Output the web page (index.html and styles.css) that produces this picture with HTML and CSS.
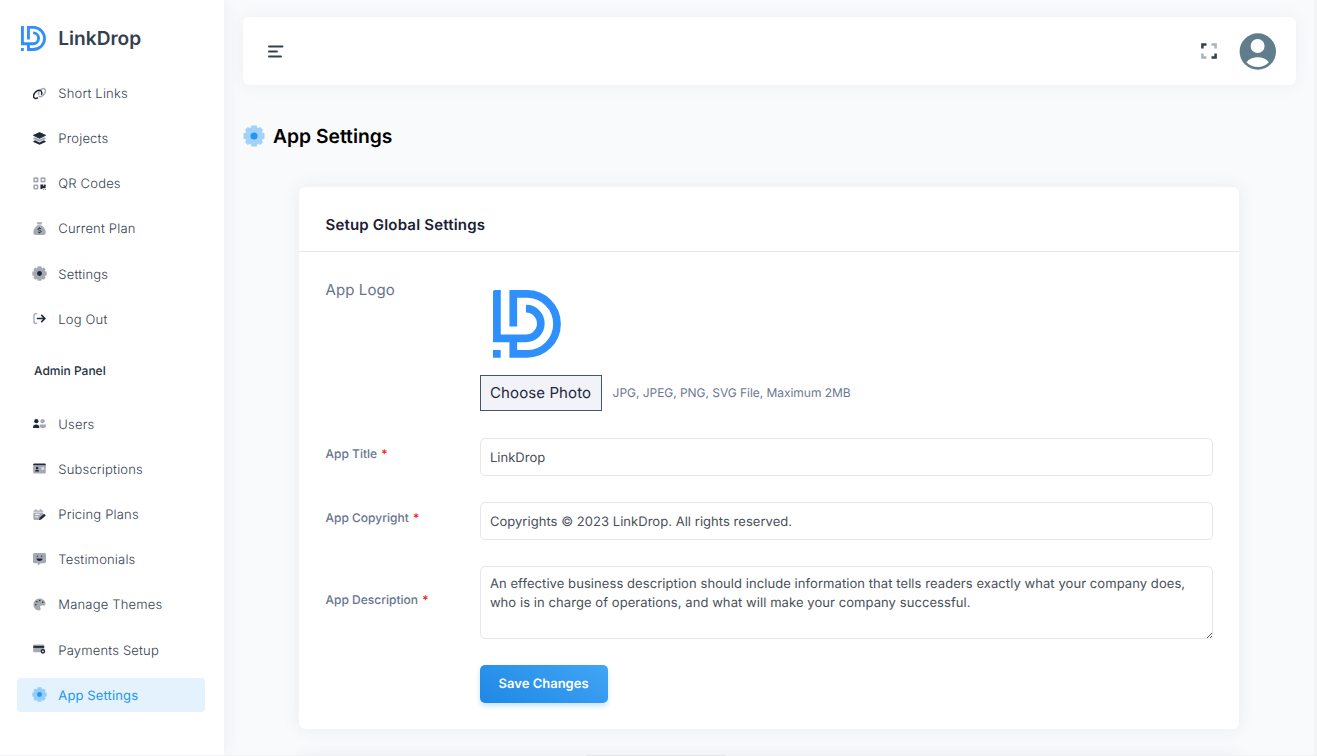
FILE: index.html
```html
<!DOCTYPE html>
<html lang="en">
<head>
<meta charset="utf-8">
<title>App Settings</title>
<link rel="stylesheet" href="styles.css">
</head>
<body>
<svg class="defs" width="0" height="0" aria-hidden="true">
  <symbol id="logo" viewBox="0 0 68 68"><path d="M3.900 1V48.300H33A14.800 14.800 0 0 0 33 18.700M20.300 36.500V3.900H34A30 30 0 0 1 34 63.900H20.300V50" fill="none" stroke="#2f8ffb" stroke-width="7.700"/><path d="M0 60h7.700v7.800H0zM0 2Q0 0 2 0h5.700v2z" fill="#2f8ffb"/></symbol>
  <symbol id="gear" viewBox="0 0 24 24"><path d="M9 .5h6l.6 2.500 1 .4 2.200-1.200 3 3-1.200 2.200.5 1 2.400.6v6l-2.400.6-.5 1 1.200 2.200-3 3-2.200-1.200-1 .5-.6 2.400H9l-.6-2.400-1-.5-2.200 1.200-3-3 1.200-2.200-.5-1L.500 15V9l2.400-.6.500-1-1.200-2.200 3-3 2.200 1.200 1-.4z" fill="currentColor" opacity=".4"/><circle cx="12" cy="12" r="3.900" fill="currentColor"/></symbol>
</svg>
<div class="app">
  <aside class="sidebar">
    <div class="brand"><svg class="brand-logo"><use href="#logo"/></svg><span>LinkDrop</span></div>
    <nav class="nav">
      <a class="item"><svg viewBox="0 0 14 14"><g fill="none" stroke="currentColor" stroke-width="1.600"><path opacity=".4" d="M6.200 9.600C7.600 11.300 9.900 10.200 11.500 8.300S14 4 12.700 2.500 9 1.800 7.400 3.900 5.600 7.800 6.500 8.600"/><path d="M9 8.500C10 6.500 9.300 4 7.800 3.600 6 3 4 4 2.500 5.700S0 10 1.300 11.500 4 12.400 5.300 11.500"/></g></svg><span>Short Links</span></a>
      <a class="item"><svg viewBox="0 0 14 14"><path d="M7 .6 13.500 3.600 7 6.800.500 3.600z" fill="currentColor" stroke="currentColor" stroke-linejoin="round"/><path opacity=".4" d="m.4 6.500 1.800-.9L7 8l4.800-2.400 1.800.9v1L7 10.500.4 7.500z" fill="currentColor"/><path d="m.4 10 1.800-1L7 11.200 11.800 9l1.800 1v.8L7 13.700.4 10.800z" fill="currentColor"/></svg><span>Projects</span></a>
      <a class="item"><svg viewBox="0 0 14 14"><g fill="none" stroke="currentColor" stroke-width="1.700" opacity=".4"><rect x="1.200" y="1.200" width="3.800" height="3.800" rx=".5"/><rect x="8.900" y="1.200" width="3.800" height="3.800" rx=".5"/><rect x="1.200" y="8.900" width="3.800" height="3.800" rx=".5"/></g><path d="M8 8h3v1.500h1V8h1.600v4H10v1H8z" fill="currentColor"/><path opacity=".6" d="M11 13h1v1h-1zM13 13h1v1h-1z" fill="currentColor"/></svg><span>QR Codes</span></a>
      <a class="item"><svg viewBox="0 0 14 14"><path opacity=".4" d="M4 .2h6L9 2.800H5zM5 3.500h4c2.800 2 4.700 5 4.700 7.800 0 1.600-1 2.600-2.500 2.600H2.800C1.300 13.900.300 12.900.300 11.300.300 8.500 2.200 5.500 5 3.500z" fill="currentColor"/><path d="M8.800 7.400C7.500 6.400 5.300 6.800 5.500 8S8.700 8.900 8.700 10.100 6.500 11.600 5.200 10.600M7 5.800v1M7 11.200v1" fill="none" stroke="currentColor" stroke-width="1"/></svg><span>Current Plan</span></a>
      <a class="item"><svg class="gear"><use href="#gear"/></svg><span>Settings</span></a>
      <a class="item"><svg viewBox="0 0 14 14"><path d="M4.500 1.800H3A2 2 0 0 0 1 3.800v6.400a2 2 0 0 0 2 2h1.500" fill="none" stroke="currentColor" stroke-width="1.500" opacity=".4"/><path d="M4.800 7h7.700M9.400 3.600 12.800 7l-3.400 3.400" fill="none" stroke="currentColor" stroke-width="1.700" stroke-linecap="round"/></svg><span>Log Out</span></a>
      <h6 class="caption">Admin Panel</h6>
      <a class="item"><svg viewBox="0 0 14 14"><path d="M0 11.800c0-2.500 1-3.700 3.400-3.700s3.400 1.200 3.400 3.700z" fill="currentColor"/><circle cx="3.600" cy="4.500" r="2.300" fill="currentColor"/><g opacity=".4" fill="currentColor"><circle cx="10.300" cy="4.500" r="2.300"/><path d="M7.200 8h6.700v1.300c0 1.700-1 2.500-3.300 2.500S7.200 11 7.200 9.300z"/></g></svg><span>Users</span></a>
      <a class="item"><svg viewBox="0 0 14 14"><path opacity=".4" d="M.2 3.500h13.600v7.800q0 1.200-1.200 1.200H1.400Q.2 12.500.2 11.300z" fill="currentColor"/><path d="M9 5.500h3v3H9z" fill="#fff" opacity=".6"/><path d="M.2 3.500V2.600Q.2 1.700 1.400 1.700h11.200q1.200 0 1.200.9v.9zM2.200 10.300c.2-1.600 1-2 2.200-2s2 .4 2.200 2z" fill="currentColor"/><circle cx="4.400" cy="6.500" r="1.300" fill="currentColor"/></svg><span>Subscriptions</span></a>
      <a class="item"><svg viewBox="0 0 14 14"><g opacity=".4" fill="currentColor"><path d="M.4 4V2.800h2V1.300H4v1.500h3.300V1.300H9v1.500h2V4zM.4 4.800H11v3L7 12.800H1.600Q.400 12.800.400 11.600z"/></g><path d="M2.300 6.800h5M2.300 9.500h3.400" stroke="#fff" stroke-width="1"/><path d="m6.500 13 .6-2.400 4.800-4.400 1.900 1.800-4.900 4.400z" fill="currentColor"/></svg><span>Pricing Plans</span></a>
      <a class="item"><svg viewBox="0 0 14 14"><path opacity=".4" d="M1.600 0h10.800Q14 0 14 1.600v7.800q0 1.600-1.600 1.600H8.500l-3.300 2.700V11H1.600Q0 11 0 9.400V1.600Q0 0 1.600 0z" fill="currentColor"/><path d="M3.800 6h6.400c0 1.500-1 2.500-3.200 2.500S3.800 7.500 3.800 6zM4 3h1.500v1H4zM8.500 3H10v1H8.500z" fill="currentColor"/></svg><span>Testimonials</span></a>
      <a class="item"><svg viewBox="0 0 14 14"><path opacity=".4" d="M7 .5c3.600 0 6.500 2.600 6.500 5.700 0 1.300-.9 2-2.100 2H9.300c-1.500 0-2 1-1.400 2.300.7 1.400.3 3-1.400 3C3 13.300.5 10.500.5 7S3.400.5 7 .5z" fill="currentColor"/><g fill="currentColor"><circle cx="3" cy="7.300" r=".8"/><circle cx="4.100" cy="4.100" r=".8"/><circle cx="7.200" cy="2.700" r=".8"/><circle cx="10.500" cy="4.500" r=".8"/></g></svg><span>Manage Themes</span></a>
      <a class="item"><svg viewBox="0 0 14 14"><path opacity=".4" d="M.2 3V2.500Q.2 1.500 1.200 1.500h9.900q1 0 1 1V3zM.2 5.300h11.900v2Q9 7 8.500 10H1.200q-1 0-1-1z" fill="currentColor"/><path d="M.2 3h11.900v2.300H.2z" fill="currentColor"/><circle cx="10.700" cy="9" r="1.700" fill="none" stroke="currentColor" stroke-width="1.500"/></svg><span>Payments Setup</span></a>
      <a class="item active"><svg class="gear"><use href="#gear"/></svg><span>App Settings</span></a>
    </nav>
  </aside>
  <main class="main">
    <header class="topbar">
      <svg class="menu" viewBox="0 0 16 13"><path d="M1 1.500h13.500M1 6.500h8M1 11.500h12" stroke="#344050" stroke-width="1.900" stroke-linecap="round"/></svg>
      <div class="tools">
        <svg class="expand" viewBox="0 0 16 16"><g fill="none" stroke="#344050" stroke-width="2.500"><path d="M1.400 5.500V1.400H5.500M10.500 14.600h4.100V10.500"/><path opacity=".4" d="M10.500 1.400h4.100V5.500M1.400 10.500v4.100H5.500"/></g></svg>
        <svg class="avatar" viewBox="0 0 37 37"><circle cx="18.800" cy="18.500" r="18.200" fill="#607d8b"/><circle cx="18.600" cy="13" r="7" fill="#fff"/><path d="M7.500 29.200C9.800 26 14.300 24.300 18.700 24.300s8.900 1.700 11.200 4.900C27.300 32 22.800 34 18.700 34S10.100 32 7.500 29.200z" fill="#fff"/></svg>
      </div>
    </header>
    <h1 class="title"><svg><use href="#gear"/></svg>App Settings</h1>
    <section class="card">
      <h2 class="card-head">Setup Global Settings</h2>
      <form class="form">
        <div class="row logo-row">
          <label class="big-label">App Logo</label>
          <div>
            <svg class="preview"><use href="#logo"/></svg>
            <div class="upload"><span class="choose">Choose Photo</span><span class="hint">JPG, JPEG, PNG, SVG File, Maximum 2MB</span></div>
          </div>
        </div>
        <div class="row field"><label>App Title <b>*</b></label><input class="control" value="LinkDrop"></div>
        <div class="row field"><label>App Copyright <b>*</b></label><input class="control" value="Copyrights © 2023 LinkDrop. All rights reserved."></div>
        <div class="row field"><label>App Description <b>*</b></label><div class="area-wrap"><textarea class="control area">An effective business description should include information that tells readers exactly what your company does, who is in charge of operations, and what will make your company successful.</textarea><svg class="grip" viewBox="0 0 5 5"><path d="M0 5 5 0M3 5 5 3" stroke="#444" stroke-width=".9"/></svg></div></div>
        <div class="row"><span></span><button type="button" class="save">Save Changes</button></div>
      </form>
    </section>
    <section class="card next"></section>
  </main>
  <div class="gutter"></div>
</div>
<div class="bottom-edge"><span></span></div>
</body>
</html>
```
FILE: styles.css
```css
* { box-sizing: border-box; }
body { margin: 0; height: 756px; overflow: hidden; background: #f9fafc; font-family: Inter, "Liberation Sans", sans-serif; color: #4d5969; text-rendering: geometricPrecision; }
h1, h2, h6 { margin: 0; }
.defs { display: block; position: absolute; }
.app { display: flex; height: 755px; overflow: hidden; }
.sidebar { flex: 0 0 223.5px; background: #fff; box-shadow: 0 0 18px rgba(50, 60, 80, .08); }
.brand { display: flex; align-items: center; height: 76px; padding-left: 21px; gap: 12.3px; font-size: 19.1px; font-weight: 600; color: #344050; }
.brand-logo { width: 25px; height: 25px; }
.nav { padding: 0 18.5px 0 17px; }
.item { display: flex; align-items: center; height: 34px; margin-bottom: 11.15px; padding-left: 16px; gap: 12.3px; border-radius: 4px; font-size: 13px; font-weight: 300; letter-spacing: .18px; color: #364152; }
.item span { padding-top: 2px; }
.item svg { width: 13px; height: 13px; color: #1e293b; flex: none; }
.item svg.gear { width: 15px; height: 15px; margin: 0 -1px; }
.item.active { background: #e3f2fd; color: #2196f3; font-weight: 400; letter-spacing: .13px; }
.item.active svg { color: #2196f3; }
.caption { height: 60px; padding: 16px 0 0 17px; font-size: 12px; line-height: 16px; font-weight: 500; color: #252f40; }
.main { flex: 1; padding: 17.4px 18.5px 0 19px; }
.topbar { display: flex; align-items: center; justify-content: space-between; height: 68px; padding: 0 19.5px 0 25.5px; background: #fff; border-radius: 6px; box-shadow: 0 0 18px rgba(50, 60, 80, .06); }
.menu { width: 16px; height: 13px; }
.tools { display: flex; align-items: center; gap: 22px; }
.expand { width: 16px; height: 16px; }
.avatar { width: 37px; height: 37px; }
.title { display: flex; align-items: center; gap: 8.5px; height: 101.6px; font-size: 19.3px; font-weight: 600; color: #000; }
.title svg { width: 22px; height: 22px; color: #2196f3; }
.card { width: 940px; height: 542px; margin-left: 56.5px; background: #fff; border-radius: 6px; box-shadow: 0 0 18px rgba(50, 60, 80, .08); }
.card-head { height: 65px; padding: 27px 26.5px 0; border-bottom: 1px solid #e5e7eb; font-size: 15px; letter-spacing: .18px; line-height: 22px; font-weight: 600; color: #1a2035; }
.form { padding: 27px 26px 0 26.5px; }
.row { display: grid; grid-template-columns: 154.1px 1fr; }
.logo-row { height: 159px; }
.big-label { font-size: 15px; letter-spacing: .1px; line-height: 22px; color: #67748e; }
.preview { display: block; width: 68px; height: 68px; margin: 11.5px 0 17px 13px; }
.upload { display: flex; align-items: center; gap: 11px; }
.choose { display: flex; align-items: center; justify-content: center; width: 122px; height: 36px; padding-bottom: 1px; background: #f1f3f8; border: 1px solid #475569; font-size: 15px; letter-spacing: .1px; color: #1e293b; }
.hint { font-size: 12px; letter-spacing: -.04px; color: #6b7891; padding-bottom: 1px; }
.field { align-items: center; margin-bottom: 26px; }
.field label { font-size: 12px; font-weight: 500; color: #67748e; padding-bottom: 6px; }
.field b { color: #f02020; font-weight: 500; margin-left: 1px; }
.control { display: block; width: 100%; height: 38px; padding: 1.5px 9.3px 0; border: 1px solid #e5e7eb; border-radius: 5px; background: #fff; font: 13px/19px Inter, sans-serif; letter-spacing: .04px; text-rendering: geometricPrecision; color: #495057; outline: none; }
.area-wrap { position: relative; }
.area { height: 73px; padding: 8px 9.3px; letter-spacing: .07px; resize: none; }
.grip { position: absolute; right: 1px; bottom: 1px; width: 5px; height: 5px; }
.save { justify-self: start; width: 128px; height: 38px; padding: 1px 0 0; border: 0; border-radius: 5px; background: linear-gradient(30deg, #1e88e5, #42a5f5); box-shadow: 0 3px 5px rgba(33, 150, 243, .25); font: 600 13px Inter, sans-serif; text-rendering: geometricPrecision; color: #fff; }
.next { margin-top: 27px; }
.gutter { flex: 0 0 3px; background: #f2f4f6; }
.bottom-edge { height: 1px; background: #f2f2f4; }
.bottom-edge span { display: block; width: 140px; height: 1px; margin-left: 586px; background: #e5e6e8; }
```
